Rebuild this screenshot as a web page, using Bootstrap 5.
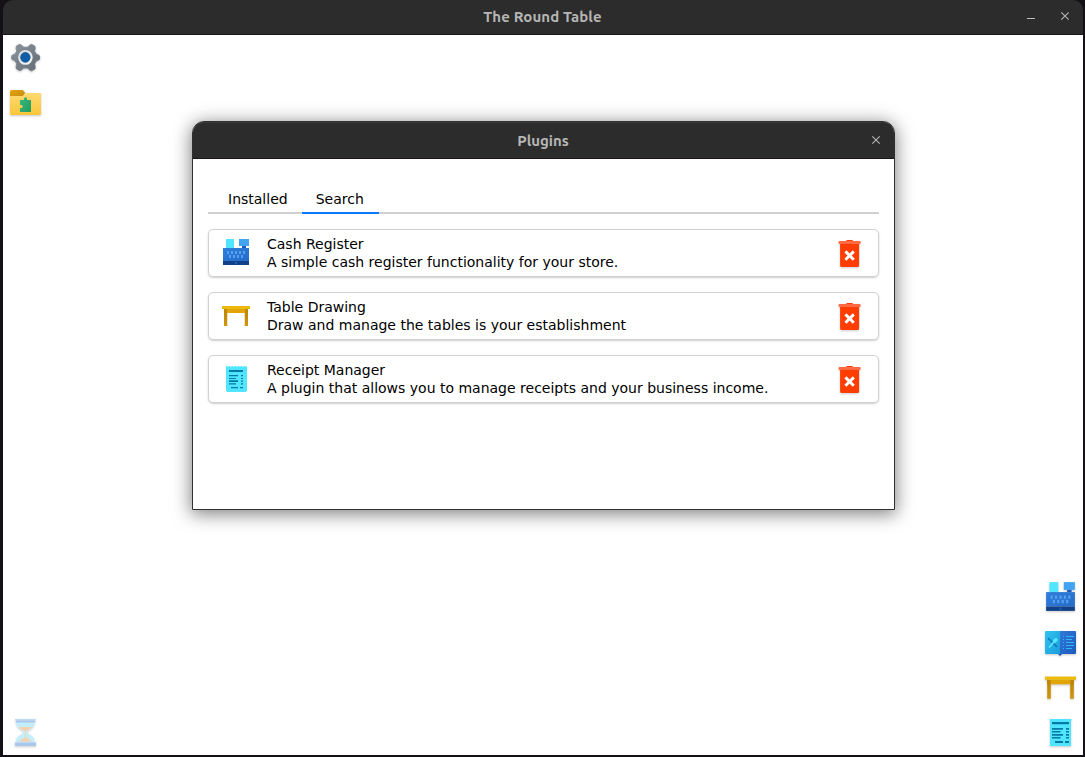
<!DOCTYPE html>
<html lang="en">
<head>
<meta charset="utf-8">
<meta name="viewport" content="width=device-width, initial-scale=1">
<title>The Round Table</title>
<link href="https://cdn.jsdelivr.net/npm/bootstrap@5.3.0/dist/css/bootstrap.min.css" rel="stylesheet">
<style>
  body { background: #131116; font-family: "DejaVu Sans", sans-serif; font-size: 14px; line-height: 18px; color: #000; }
  svg { display: block; }
  .app-window { height: 755px; margin: 0 2px 0 3px; }
  .titlebar { background: #2c2c2c; color: #b6b6b6; border-bottom: 1px solid #1b1518; font-family: Ubuntu, "Open Sans", sans-serif; font-weight: 700; font-size: 15px; }
  .app-window > .titlebar { height: 35px; border-radius: 10px 10px 0 0; }
  .app-title { letter-spacing: .1px; margin-right: 1px; }
  .win-buttons { right: 13px; top: 11px; gap: 24px; }
  .desktop { background: #fff; padding: 7px 7px 7px 6px; }
  .dock { gap: 13px; }
  .dock svg { width: 32px; height: 32px; filter: drop-shadow(0 1px 1px rgba(0,0,0,.22)); }
  .dock .dock-sm { width: 31px; height: 31px; margin: 0 0 1px 1px; }
  .plugin-window { left: 192px; top: 121px; width: 703px; height: 389px; border: 1px solid #303030; border-radius: 12px 12px 0 0; background: #fff; box-shadow: 0 3px 18px 1px rgba(0,0,0,.5); }
  .plugin-window .titlebar { height: 37px; padding-top: 2px; padding-right: 1px; border-radius: 11px 11px 0 0; box-shadow: inset 0 1px #383a38; }
  .plugin-window .win-buttons { top: 13px; }
  .plugin-body { padding: 22px 15px; }
  .plugin-tabs { height: 33px; border-bottom: 2px solid #d0d0d3; padding-left: 6px; margin-bottom: 15px; }
  .plugin-tabs .nav-link { color: #000; padding: 9px 14px 4px; height: 33px; border-bottom: 2px solid transparent; border-radius: 0; }
  .plugin-tabs .nav-link.active { border-bottom-color: #0a7bff; padding-right: 15px; }
  .plugin-list { gap: 15px; }
  .plugin-row { height: 48px; border: 1px solid #d0d1d5; border-radius: 5px; box-shadow: 0 1px 2px rgba(0,0,0,.2); padding: 0 17px 0 13px; }
  .plugin-row .plugin-icon { width: 28px; height: 28px; margin-right: 17px; margin-top: -2px; }
  .trash { margin-top: 2px; filter: drop-shadow(0 1px 1px rgba(0,0,0,.2)); }
</style>
</head>
<body class="overflow-hidden">
<svg width="0" height="0" class="position-absolute" aria-hidden="true">
  <defs>
    <linearGradient id="steel" x2="1" y2="1"><stop stop-color="#8b949c"/><stop offset="1" stop-color="#626c76"/></linearGradient>
    <linearGradient id="ring" x2="1" y2="1"><stop stop-color="#d5d5d5"/><stop offset="1" stop-color="#fafafa"/></linearGradient>
    <linearGradient id="folder" x2="0" y2="1"><stop stop-color="#fdda72"/><stop offset="1" stop-color="#fbc63a"/></linearGradient>
    <linearGradient id="flap" x2="1" y2="1"><stop stop-color="#e4a50d"/><stop offset="1" stop-color="#c88c14"/></linearGradient>
    <linearGradient id="piece" x2="1" y2="1"><stop stop-color="#36b97b"/><stop offset="1" stop-color="#239b62"/></linearGradient>
    <linearGradient id="till" x2="1" y2="1"><stop stop-color="#2f7fdc"/><stop offset="1" stop-color="#256bc9"/></linearGradient>
    <linearGradient id="pageL" x2="1" y2="1"><stop stop-color="#34c3f2"/><stop offset="1" stop-color="#199ddb"/></linearGradient>
    <linearGradient id="pageR" x2="1" y2="1"><stop stop-color="#3079d9"/><stop offset="1" stop-color="#1b5abd"/></linearGradient>
    <linearGradient id="leg" x2="0" y2="1"><stop stop-color="#bd8300"/><stop offset="1" stop-color="#d09610"/></linearGradient>
  </defs>
  <symbol id="i-cash" viewBox="0 0 28 28">
    <path fill="#50e6ff" d="M4 1h8v9H4z"/><path fill="#42a3f2" d="M17 1h10v7H17z"/><path fill="#1b5cba" d="M20 8h4v2h-4z"/>
    <path fill="url(#till)" d="M1 10h26v13H1z"/><path fill="#113f88" d="M1 23h26v4H1z"/>
    <path fill="#1b5cba" d="M13 24h2v2h-2z"/>
    <path fill="#559ff0" d="M5 13h2v3H5zM9 13h2v3H9zM13 13h2v3h-2zM17 13h2v3h-2zM21 13h2v3h-2zM7 17h2v3H7zM11 17h2v3h-2zM15 17h2v3h-2zM19 17h2v3h-2z"/>
  </symbol>
  <symbol id="i-table" viewBox="0 0 28 28">
    <path fill="url(#leg)" d="M2 8h3.250v17H2zM22.750 8H26v17h-3.250z"/><path fill="#e2a407" d="M5 8h18v4H5z"/><path fill="#c18600" d="M2 8h3v4H2zM23 8h3v4h-3z"/><path fill="#ecba0b" d="M0 5h28v3H0z"/>
  </symbol>
  <symbol id="i-receipt" viewBox="0 0 28 28">
    <path fill="#50e6ff" d="M4 2h1l1 1 1-1h1l1 1 1-1h1l1 1 1-1h1l1 1 1-1h1l1 1 1-1h1l1 1 1-1h1l1 1 1-1v25h-1v1H5v-1H4z"/>
    <path fill="#057aa6" d="M7 6h14v2H7zM7 11h9v1.200H7zM7 14h7v1.100H7zM7 16.200h9v1.900H7zM7 19.300h7v1.100H7zM9 23h7v1.200H9zM18 23h3v1.200h-3zM19 11h2v1.200h-2zM19 14h2v1.100h-2zM19 16.400h2v1.400h-2zM19 19.300h2v1.100h-2z"/>
  </symbol>
  <symbol id="i-receipt-lg" viewBox="0 0 32 32">
    <path fill="#50e6ff" d="M6 3h21v27H6z"/>
    <path fill="#50e6ff" opacity=".6" d="M5.200 3h22.600v1.500H5.200z"/>
    <path fill="#057aa6" d="M8 6h17v2.300H8zM8 12h11v1.700H8zM8 15h8.500v1.500H8zM8 18h11v1.700H8zM8 21h8.500v1.500H8zM11 25h8v2h-8zM21 25h4v2h-4zM22 12h3v1.700h-3zM22 15h3v1.500h-3zM22 18h3v1.700h-3zM22 21h3v1.500h-3z"/>
  </symbol>
  <symbol id="i-trash" viewBox="0 0 23 28">
    <g transform="translate(.600 -.200)">
    <path fill="#ff3d00" d="M1.500 4h19v21.700a1.500 1.500 0 0 1-1.500 1.500H3a1.500 1.500 0 0 1-1.500-1.500zM7.500.900Q8 .200 9 .200h4q1 0 1.500.700V2h-7z"/>
    <rect y="1.200" width="22" height="2.900" rx=".8" fill="#ff6a42"/>
    <path d="m6.800 11.600 8.400 8.400m0-8.400-8.400 8.400" stroke="#fff" stroke-width="2.900" fill="none"/>
    </g>
  </symbol>
  <symbol id="i-close" viewBox="0 0 10 10"><path d="m1.300 1.300 7.400 7.400m0-7.400-7.400 7.400" stroke="#b0b0b0" stroke-width="1.200" fill="none"/></symbol>
</svg>

<main class="app-window position-relative d-flex flex-column">
  <header class="titlebar position-relative d-flex align-items-center justify-content-center">
    <span class="app-title">The Round Table</span>
    <div class="win-buttons position-absolute d-flex">
      <svg width="10" height="10" viewBox="0 0 10 10"><path d="M1 7.500h8" stroke="#bbb"/></svg>
      <svg width="10" height="10"><use href="#i-close"/></svg>
    </div>
  </header>

  <div class="desktop flex-grow-1 d-flex justify-content-between">
    <nav class="dock d-flex flex-column">
      <svg viewBox="0 0 32 32">
        <g transform="translate(2.400 .900) scale(.890 .910)">
        <path fill="url(#steel)" stroke="url(#steel)" stroke-linejoin="round" d="m9.500 1.500 2.700 1.500 1.600 1.700h4.400L19.800 3l2.700-1.500 4 2.200.2 3-.8 2.300 2.200 3.600 2.300.7 1.300 1v3.600l-1.300 1-2.300.7-2.200 3.600.8 2.300-.2 3-4 2.200-2.700-1.500-1.600-1.700h-4.400L12.200 29l-2.700 1.500-4-2.200-.2-3 .8-2.300-2.200-3.600-2.300-.7-1.300-1v-3.600l1.300-1 2.300-.7 2.200-3.600-.8-2.300.2-3z"/>
        <circle cx="15.700" cy="15.900" r="8.200" fill="url(#ring)"/><circle cx="15.700" cy="15.900" r="5.800" fill="#0f5da5"/>
        </g>
      </svg>
      <svg viewBox="0 0 32 32">
        <path fill="url(#flap)" d="M1 9V4.500Q1 3 2.500 3h11.300l2.400 2.700L13.800 9z"/>
        <path fill="url(#folder)" d="M1 9h13l2.500-3H32v21q0 1-1 1H2q-1 0-1-1z"/>
        <path fill="url(#piece)" d="M11 13h4v-1.200a1.500 1.500 0 0 1 3 0V13h4v12H11v-4h1.200a1.500 1.500 0 0 0 0-3H11z"/>
      </svg>
      <svg class="mt-auto" viewBox="0 0 32 32" opacity=".9">
        <path fill="#bdeefa" d="M7 6h18.500q0 6-7 8.500v3q7 2.500 7 8H7q0-5.500 7-8v-3Q7 12 7 6z"/>
        <path fill="#f6cba6" d="M10 11h12.800q-1.800 2.900-5.300 3.800h-2.200q-3.500-.9-5.300-3.800zM11 25.500q1-3 5.400-3.800 4.400.8 5.400 3.800z"/><path fill="#f6cba6" d="M15.900 14h1v8h-1z"/>
        <path fill="#b5d8f8" d="M6 3h21v1.500H6zM6 26h21v1.500H6z"/><path fill="#a0c1ec" d="M7 4.500h19v2H7zM6 27h21v3H6z"/>
      </svg>
    </nav>
    <nav class="dock d-flex flex-column justify-content-end">
      <svg class="dock-sm"><use href="#i-cash"/></svg>
      <svg viewBox="0 0 32 32">
        <path fill="#1a55b5" d="M14.500 27h3v1.500L16 30l-1.500-1.500z"/>
        <path fill="url(#pageL)" d="M1 5h15v23H2q-1 0-1-1V6q0-1 1-1z"/><path fill="url(#pageR)" d="M16 5h15q1 0 1 1v21q0 1-1 1H16z"/>
        <path stroke="#0f79bd" stroke-width="1.700" d="m4 12 4.500 4.500M9 17l4 4"/>
        <path stroke="#65edff" stroke-width="1.400" d="M5 21.500 10 16"/><ellipse cx="11.300" cy="14.400" rx="2.800" ry="1.900" transform="rotate(-45 11.300 14.400)" fill="#50e6ff"/>
        <path stroke="#30b5f5" d="M19 10.500h1M22 10.500h8M19 13.500h1M22 13.500h6M19 16.500h1M22 16.500h8M19 19.500h1M22 19.500h8M19 22.500h1M22 22.500h6"/>
      </svg>
      <svg class="dock-sm"><use href="#i-table"/></svg>
      <svg><use href="#i-receipt-lg"/></svg>
    </nav>
  </div>
</main>

<section class="plugin-window position-absolute">
  <header class="titlebar position-relative d-flex align-items-center justify-content-center">
    <span>Plugins</span>
    <div class="win-buttons position-absolute"><svg width="10" height="10"><use href="#i-close"/></svg></div>
  </header>
  <div class="plugin-body">
    <nav class="plugin-tabs nav flex-nowrap">
      <a class="nav-link" href="#">Installed</a>
      <a class="nav-link active" href="#">Search</a>
    </nav>
    <div class="plugin-list d-flex flex-column">
      <article class="plugin-row d-flex align-items-center">
        <svg class="plugin-icon"><use href="#i-cash"/></svg>
        <div class="flex-grow-1"><div>Cash Register</div><div>A simple cash register functionality for your store.</div></div>
        <svg class="trash" width="23" height="28"><use href="#i-trash"/></svg>
      </article>
      <article class="plugin-row d-flex align-items-center">
        <svg class="plugin-icon"><use href="#i-table"/></svg>
        <div class="flex-grow-1"><div>Table Drawing</div><div>Draw and manage the tables is your establishment</div></div>
        <svg class="trash" width="23" height="28"><use href="#i-trash"/></svg>
      </article>
      <article class="plugin-row d-flex align-items-center">
        <svg class="plugin-icon"><use href="#i-receipt"/></svg>
        <div class="flex-grow-1"><div>Receipt Manager</div><div>A plugin that allows you to manage receipts and your business income.</div></div>
        <svg class="trash" width="23" height="28"><use href="#i-trash"/></svg>
      </article>
    </div>
  </div>
</section>
<script src="https://cdn.jsdelivr.net/npm/bootstrap@5.3.0/dist/js/bootstrap.bundle.min.js"></script>
</body>
</html>
